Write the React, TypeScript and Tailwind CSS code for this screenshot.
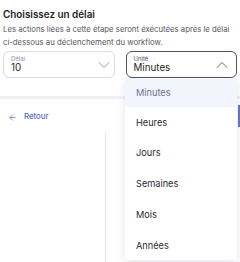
import { ChevronDown, ChevronUp, ArrowLeft } from "lucide-react"

const units = ["Minutes", "Heures", "Jours", "Semaines", "Mois", "Années"]

export default function App() {
  return (
    <div className="relative w-[240px] h-[262px] overflow-hidden bg-white font-['Inter',sans-serif]">
      {/* Delay section */}
      <div className="px-[3px] pt-[7px]">
        <h2 className="h-[14px] text-[9.9px] font-semibold text-[#1f1f24] leading-[14px]">Choisissez un délai</h2>
        <p className="mt-[2px] w-[229px] h-[26px] text-[7.75px] leading-[13px] text-[#55555e]">
          Les actions liées à cette étape seront éxécutées après le délai ci-dessous au déclenchement du workflow.
        </p>
        <div className="mt-[2px] grid grid-cols-2 gap-[11px]">
          <div className="h-[27px] rounded-[6px] border border-[#dcdde3] flex items-center pl-[7px]">
            <div className="flex-1 flex flex-col leading-none">
              <span className="text-[6px] text-[#8a90b0]">Délai</span>
              <span className="text-[9.8px] text-[#1f1f24] mt-[1px]">10</span>
            </div>
            <ChevronDown className="w-[20px] h-[20px] text-[#9a9aa4]" strokeWidth={1.2} />
          </div>
          <div className="h-[27px] rounded-[6px] border border-[#4d5268] flex items-center pl-[7px] pr-[4px]">
            <div className="flex-1 flex flex-col leading-none">
              <span className="text-[6px] text-[#4d5268]">Unité</span>
              <span className="text-[9.8px] text-[#1f1f24] mt-[1px]">Minutes</span>
            </div>
            <ChevronUp className="w-[20px] h-[20px] text-[#6a6a74]" strokeWidth={1.2} />
          </div>
        </div>
      </div>

      {/* Separator */}
      <div className="mt-[18px] h-[3px] bg-[#eef0f5]" />

      {/* Footer nav */}
      <div className="flex items-center gap-[7px] pl-[8px] pt-[3px] h-[33px]">
        <ArrowLeft className="w-[9px] h-[9px] text-[#5567c4]" strokeWidth={1.8} />
        <span className="text-[7.8px] font-medium text-[#5567c4]">Retour</span>
      </div>

      <div className="flex h-[140px]">
        <div className="w-[106px] border-r border-[#e6e8ef]" />
      </div>

      {/* Side accent peeking behind the menu */}
      <div className="absolute right-0 top-[105px] w-[2px] h-[22px] bg-[#6676c9]" />

      {/* Open dropdown */}
      <ul className="absolute left-[125px] top-[79px] w-[112px] h-[181px] bg-white shadow-[0_2px_8px_rgba(30,40,80,0.12)]">
        {units.map((u, i) => (
          <li
            key={u}
            className={
              i === 0
                ? "h-[28px] flex items-center pl-[11px] text-[9.2px] text-[#6e7290] bg-[#f3f5fc]"
                : "h-[30.9px] flex items-center pl-[11px] text-[9.2px] text-[#2a2a30]"
            }
          >
            {u}
          </li>
        ))}
      </ul>
    </div>
  )
}
